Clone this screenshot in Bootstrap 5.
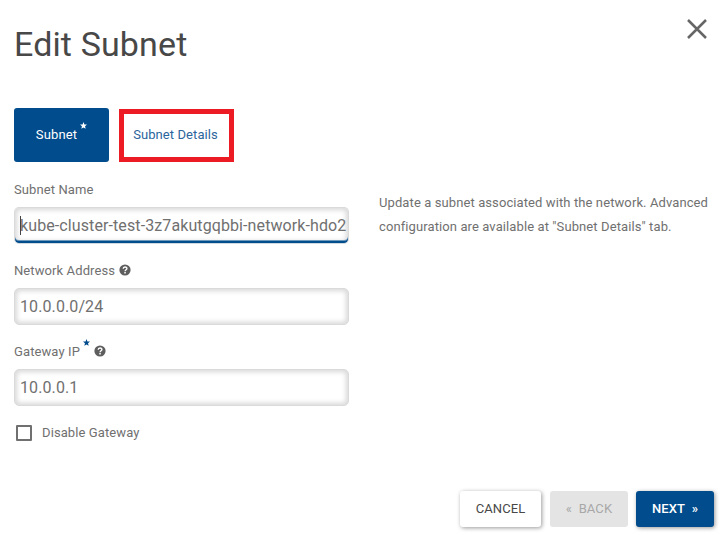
<!DOCTYPE html>
<html lang="en">
<head>
<meta charset="utf-8">
<meta name="viewport" content="width=device-width, initial-scale=1">
<title>Edit Subnet</title>
<link href="https://cdn.jsdelivr.net/npm/bootstrap@5.3.0/dist/css/bootstrap.min.css" rel="stylesheet">
<style>
body{font-family:Roboto,sans-serif;font-size:13px;line-height:24px;letter-spacing:.1px;color:#707070;background:#fff}
.wizard{width:728px;height:540px;padding:13px 14px;overflow:hidden}
.wizard-head{height:95px}
.wizard-title{font-size:34px;line-height:40px;font-weight:400;letter-spacing:.13px;color:#484848;margin:11px 0 0}
.close-x{width:20px;height:20px;margin:6px 7px 0 0}
.tab-row{height:54px;gap:10px}
.tab-row .nav-link{font-size:13px;letter-spacing:.08px;padding:0;display:flex;align-items:center;justify-content:center}
.tab-main{width:95px;height:54px;border-radius:3px}
.tab-row .nav-link.active{background:#004c8c;color:#fff;font-weight:400;letter-spacing:.15px}
.tab-row .tab-marked{width:115px;height:53px;border:5px solid #ed1c24;border-radius:0;color:#2b659c;margin-top:1px;padding:0 2px 2px 0}
.star{width:7px;height:7px}
.tab-star{margin:0 0 19px 3px}
.label-star{margin:0 0 20px 3px}
.form-area{gap:30px;padding-top:16px}
.fields{width:335px}
.field{height:81px}
.field .form-label{height:24px;margin-bottom:5px}
.hint{margin:0 0 2px 4px}
.field .form-control{height:37px;border:1px solid #dadada;border-radius:5px;padding:0 0 0 5px;font-size:16px;letter-spacing:.1px;color:#707070;box-shadow:inset 0 0 5px 2px #d8d8d8;overflow:hidden;white-space:nowrap;line-height:35px}
.field .form-control.editing{border-bottom:1px solid #d0d8e0;box-shadow:inset 0 -2px 0 #004c8c,inset 0 -3px 0 #6f98bd,inset 0 0 5px 2px #d8d8d8}
.caret{width:1px;height:19px;background:#444;left:5px;top:8px}
.help-text{width:335px;padding-top:13px}
.box{width:16px;height:16px;border:2px solid #707070;border-radius:1px;margin:0 10px 0 2px}
.footer-row{gap:8px;height:36px}
.footer-row .btn{height:36px;border:0;border-radius:3px;padding:0;font-size:13px;line-height:36px;letter-spacing:.1px;width:78px}
.footer-row .btn-cancel{width:81px;margin-right:1px;background:#fff;color:#484848;font-weight:400;box-shadow:1px 1px 4px rgba(0,0,0,.4)}
.footer-row .btn-back{background:#e4e4e4;color:#a8a8a8;opacity:1}
.footer-row .btn-next{background:#004c8c;color:#fff;font-weight:500;box-shadow:1px 1px 4px rgba(0,0,0,.4)}
</style>
</head>
<body>
<main class="wizard d-flex flex-column">
  <header class="wizard-head d-flex justify-content-between align-items-start">
    <h1 class="wizard-title">Edit Subnet</h1>
    <svg class="close-x" viewBox="0 0 20 20" role="img" aria-label="Close"><path d="M1 1 19 19M19 1 1 19" stroke="#666" stroke-width="2.5" fill="none"/></svg>
  </header>
  <nav class="nav tab-row">
    <a class="nav-link tab-main active" href="#">Subnet<svg class="star tab-star" viewBox="0 0 10 10"><path d="M5 0 6.3 3.4 10 3.7 7.2 6 8.1 9.6 5 7.7 1.9 9.6 2.8 6 0 3.7 3.7 3.4Z" fill="#fff"/></svg></a>
    <a class="nav-link tab-marked" href="#">Subnet Details</a>
  </nav>
  <section class="form-area d-flex">
    <div class="fields">
      <div class="field">
        <div class="form-label">Subnet Name</div>
        <div class="form-control editing position-relative">kube-cluster-test-3z7akutgqbbi-network-hdo2<span class="caret position-absolute"></span></div>
      </div>
      <div class="field">
        <div class="form-label d-flex align-items-center">Network Address
          <svg class="hint" width="12" height="12" viewBox="0 0 12 12"><circle cx="6" cy="6" r="5.6" fill="#5e5e5e"/><path d="M4.2 4.7C4.2 2.4 7.9 2.4 7.9 4.5 7.9 5.8 6.1 5.8 6.1 7.2" fill="none" stroke="#fff" stroke-width="1.4"/><path d="M5.3 8.1h1.5v1.5H5.3z" fill="#fff"/></svg>
        </div>
        <div class="form-control">10.0.0.0/24</div>
      </div>
      <div class="field">
        <div class="form-label d-flex align-items-center">Gateway IP
          <svg class="star label-star" viewBox="0 0 10 10"><path d="M5 0 6.3 3.4 10 3.7 7.2 6 8.1 9.6 5 7.7 1.9 9.6 2.8 6 0 3.7 3.7 3.4Z" fill="#004c8c"/></svg>
          <svg class="hint" width="12" height="12" viewBox="0 0 12 12"><circle cx="6" cy="6" r="5.6" fill="#5e5e5e"/><path d="M4.2 4.7C4.2 2.4 7.9 2.4 7.9 4.5 7.9 5.8 6.1 5.8 6.1 7.2" fill="none" stroke="#fff" stroke-width="1.4"/><path d="M5.3 8.1h1.5v1.5H5.3z" fill="#fff"/></svg>
        </div>
        <div class="form-control">10.0.0.1</div>
      </div>
      <div class="d-flex align-items-center"><span class="box"></span>Disable Gateway</div>
    </div>
    <div class="help-text">Update a subnet associated with the network. Advanced configuration are available at "Subnet Details" tab.</div>
  </section>
  <footer class="footer-row d-flex justify-content-end mt-auto">
    <button class="btn btn-cancel">CANCEL</button>
    <button class="btn btn-back" disabled>«&nbsp; BACK</button>
    <button class="btn btn-next">NEXT&nbsp; »</button>
  </footer>
</main>
<script src="https://cdn.jsdelivr.net/npm/bootstrap@5.3.0/dist/js/bootstrap.bundle.min.js"></script>
</body>
</html>
